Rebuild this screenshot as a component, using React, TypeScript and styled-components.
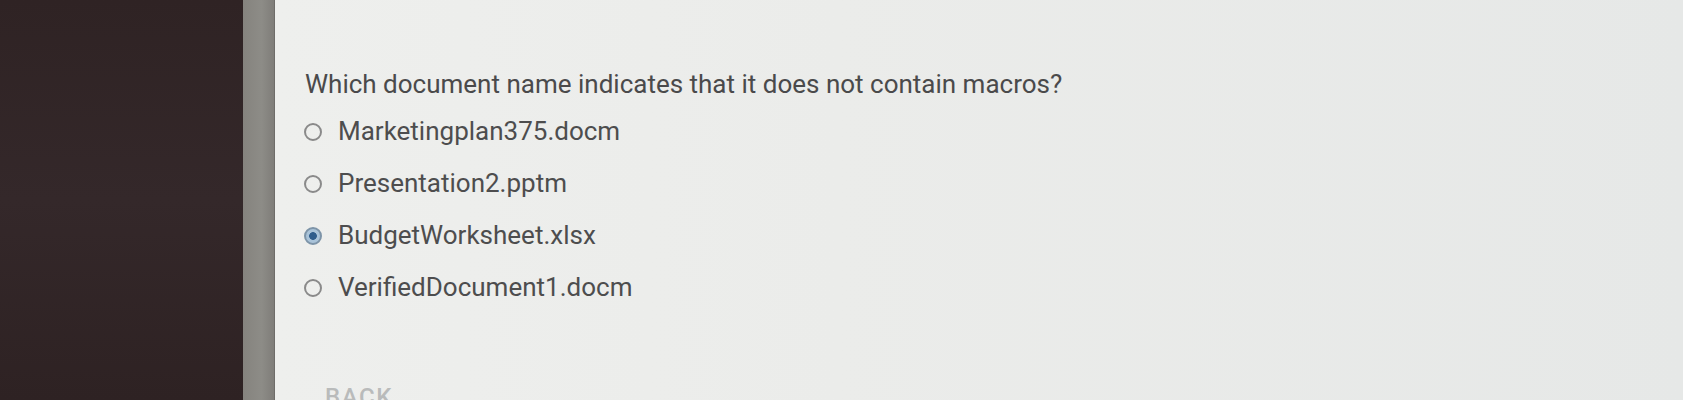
import React from "react";
import styled, { createGlobalStyle } from "styled-components";

const GlobalStyle = createGlobalStyle`
  html, body {
    margin: 0;
    padding: 0;
    background: #e9eae8;
  }
  body {
    font-family: Roboto, "Noto Sans", "Liberation Sans", sans-serif;
  }
`;

const Page = styled.div`
  display: flex;
  height: 400px;
  overflow: hidden;
`;

const DarkSide = styled.div`
  width: 243px;
  flex: 0 0 243px;
  background: linear-gradient(180deg, #2f2324 0%, #34282a 50%, #2e2223 100%);
`;

const Strip = styled.div`
  width: 31px;
  flex: 0 0 31px;
  background: linear-gradient(90deg, #85837e 0%, #8d8c87 60%, #7f7d79 100%);
  border-right: 1px solid #6e6c69;
`;

const Main = styled.main`
  flex: 1;
  display: flex;
  flex-direction: column;
  padding: 69px 40px 0 29px;
  background: linear-gradient(90deg, #eeefed 0%, #ebecea 40%, #e6e8e7 100%);
`;

const Question = styled.h2`
  margin: 0 0 0 1px;
  font-size: 26px;
  line-height: 30px;
  font-weight: 400;
  color: #4a4a4b;
`;

const OptionList = styled.div`
  display: flex;
  flex-direction: column;
  margin-top: 6px;
`;

const OptionRow = styled.label`
  display: flex;
  align-items: center;
  gap: 16px;
  height: 52px;
  cursor: pointer;
`;

const Radio = styled.span<{ $checked?: boolean }>`
  box-sizing: border-box;
  width: 18px;
  height: 18px;
  flex: 0 0 18px;
  border-radius: 50%;
  margin-top: 2px;
  border: 2.5px solid ${(p) => (p.$checked ? "#7d94a8" : "#8a8a8a")};
  background: ${(p) =>
    p.$checked
      ? "radial-gradient(circle, #2f5d8c 0 3.5px, #a9c3d9 4.2px 100%)"
      : "transparent"};
`;

const OptionText = styled.span`
  font-size: 26px;
  line-height: 30px;
  color: #4d4d4e;
`;

const Divider = styled.hr`
  border: none;
  height: 1px;
  background: #dfe0de;
  margin: 24px 0 0 21px;
`;

const BackButton = styled.button`
  align-self: flex-start;
  margin: 46px 0 0 21px;
  padding: 0;
  border: none;
  background: none;
  font-family: Roboto, "Liberation Sans", sans-serif;
  font-size: 24px;
  line-height: 28px;
  font-weight: 500;
  letter-spacing: 1.6px;
  color: #b9bbbb;
  text-transform: uppercase;
`;

const options = [
  { label: "Marketingplan375.docm", checked: false },
  { label: "Presentation2.pptm", checked: false },
  { label: "BudgetWorksheet.xlsx", checked: true },
  { label: "VerifiedDocument1.docm", checked: false },
];

export default function App() {
  return (
    <>
      <GlobalStyle />
      <Page>
        <DarkSide />
        <Strip />
        <Main>
          <Question>
            Which document name indicates that it does not contain macros?
          </Question>
          <OptionList>
            {options.map((o) => (
              <OptionRow key={o.label}>
                <Radio $checked={o.checked} />
                <OptionText>{o.label}</OptionText>
              </OptionRow>
            ))}
          </OptionList>
          <Divider />
          <BackButton>Back</BackButton>
        </Main>
      </Page>
    </>
  );
}
